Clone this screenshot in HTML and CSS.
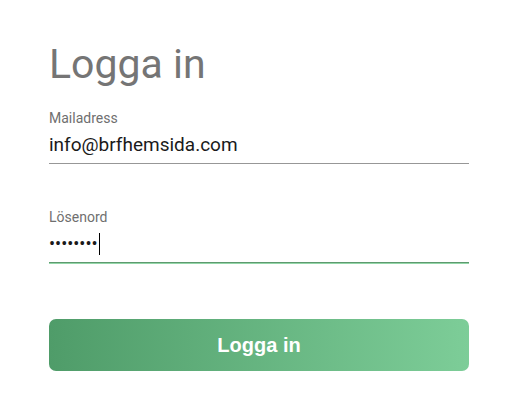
FILE: index.html
```html
<!DOCTYPE html>
<html lang="sv">
<head>
<meta charset="utf-8">
<title>Logga in</title>
<link rel="stylesheet" href="styles.css">
</head>
<body>
<main class="login">
  <h1 class="title">Logga in</h1>
  <div class="field">
    <label class="label">Mailadress</label>
    <div class="input">info@brfhemsida.com</div>
  </div>
  <div class="field field-active">
    <label class="label">Lösenord</label>
    <div class="input input-pw"><span class="dots">••••••••</span><span class="caret"></span></div>
  </div>
  <button class="btn" type="button">Logga in</button>
</main>
</body>
</html>
```
FILE: styles.css
```css
html, body {
  margin: 0;
  padding: 0;
  background: #ffffff;
}
body {
  font-family: Roboto, "Noto Sans", sans-serif;
}
.login {
  width: 420px;
  padding: 40px 0 0 49px;
  display: flex;
  flex-direction: column;
}
.title {
  margin: 0;
  font-weight: 400;
  font-size: 41px;
  line-height: 48px;
  color: #757575;
}
.field {
  display: flex;
  flex-direction: column;
}
.field:first-of-type {
  margin-top: 22px;
}
.label {
  font-size: 14px;
  line-height: 16px;
  color: #6f6f6f;
}
.input {
  font-size: 19px;
  line-height: 24px;
  color: #1a1a1a;
  padding: 7px 0 6px;
  border-bottom: 1px solid #979797;
}
.field-active {
  margin-top: 45px;
}
.input-pw {
  display: flex;
  align-items: center;
  padding: 7px 0 6px;
  border-bottom: 1px solid #5e9a6f;
  box-shadow: 0 1px 0 #93d6a8;
}
.dots {
  font-size: 18px;
  line-height: 24px;
  letter-spacing: 0px;
}
.caret {
  display: inline-block;
  width: 1px;
  height: 22px;
  background: #000;
  margin-left: 1px;
}
.btn {
  margin-top: 56px;
  height: 52px;
  border: none;
  border-radius: 7px;
  background: linear-gradient(90deg, #4f9c69 0%, #7dcd98 100%);
  color: #ffffff;
  font-family: "Liberation Sans", Arial, sans-serif;
  font-weight: 700;
  font-size: 20px;
  cursor: pointer;
}
```
